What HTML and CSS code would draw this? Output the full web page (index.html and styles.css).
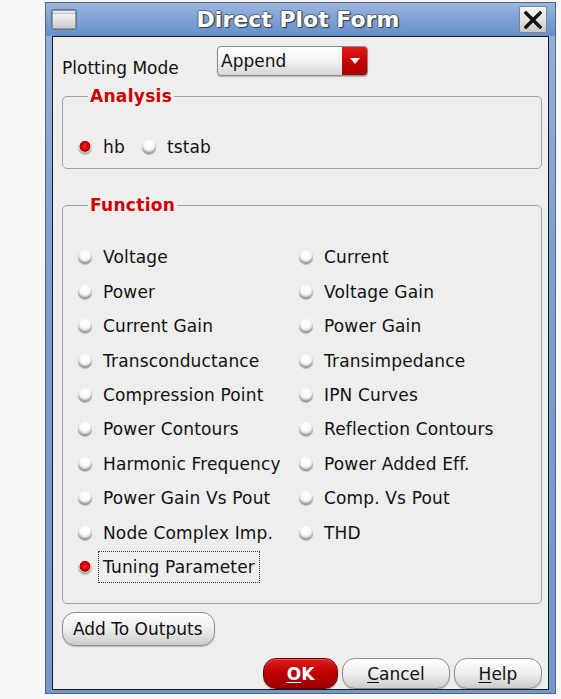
FILE: index.html
```html
<!DOCTYPE html>
<html>
<head>
<meta charset="utf-8">
<title>Direct Plot Form</title>
<link rel="stylesheet" href="styles.css">
</head>
<body>
<div class="window">
  <div class="titlebar">
    <span class="winicon">
      <svg width="26" height="21" viewBox="0 0 26 21">
        <defs>
          <linearGradient id="ig" x1="0" y1="0" x2="0" y2="1">
            <stop offset="0" stop-color="#f4f4f4"/>
            <stop offset="1" stop-color="#c9c9c9"/>
          </linearGradient>
        </defs>
        <rect x="0.5" y="0.5" width="25" height="20" rx="2" fill="#8e98a8" stroke="#6a7486"/>
        <rect x="2" y="5" width="22" height="14" fill="url(#ig)"/>
        <rect x="2" y="2" width="22" height="2.5" fill="#dfe6ef"/>
      </svg>
    </span>
    <span class="title">Direct Plot Form</span>
    <span class="closebtn">
      <svg width="18" height="18" viewBox="0 0 18 18">
        <path d="M2 2 L16 16 M16 2 L2 16" stroke="#111" stroke-width="3.4" stroke-linecap="square"/>
      </svg>
    </span>
  </div>
  <div class="panel">
    <div class="mode-row">
      <span class="mode-label">Plotting Mode</span>
      <div class="select">
        <span class="select-text">Append</span>
        <span class="select-arrow"></span>
      </div>
    </div>

    <fieldset class="group analysis">
      <legend>Analysis</legend>
      <div class="inline-opts">
        <div class="opt"><span class="radio on"></span><span class="opt-text">hb</span></div>
        <div class="opt"><span class="radio"></span><span class="opt-text">tstab</span></div>
      </div>
    </fieldset>

    <fieldset class="group function">
      <legend>Function</legend>
      <div class="opt-grid">
        <div class="opt"><span class="radio"></span><span class="opt-text">Voltage</span></div>
        <div class="opt"><span class="radio"></span><span class="opt-text">Current</span></div>
        <div class="opt"><span class="radio"></span><span class="opt-text">Power</span></div>
        <div class="opt"><span class="radio"></span><span class="opt-text">Voltage Gain</span></div>
        <div class="opt"><span class="radio"></span><span class="opt-text">Current Gain</span></div>
        <div class="opt"><span class="radio"></span><span class="opt-text">Power Gain</span></div>
        <div class="opt"><span class="radio"></span><span class="opt-text">Transconductance</span></div>
        <div class="opt"><span class="radio"></span><span class="opt-text">Transimpedance</span></div>
        <div class="opt"><span class="radio"></span><span class="opt-text">Compression Point</span></div>
        <div class="opt"><span class="radio"></span><span class="opt-text">IPN Curves</span></div>
        <div class="opt"><span class="radio"></span><span class="opt-text">Power Contours</span></div>
        <div class="opt"><span class="radio"></span><span class="opt-text">Reflection Contours</span></div>
        <div class="opt"><span class="radio"></span><span class="opt-text">Harmonic Frequency</span></div>
        <div class="opt"><span class="radio"></span><span class="opt-text">Power Added Eff.</span></div>
        <div class="opt"><span class="radio"></span><span class="opt-text">Power Gain Vs Pout</span></div>
        <div class="opt"><span class="radio"></span><span class="opt-text">Comp. Vs Pout</span></div>
        <div class="opt"><span class="radio"></span><span class="opt-text">Node Complex Imp.</span></div>
        <div class="opt"><span class="radio"></span><span class="opt-text">THD</span></div>
        <div class="opt"><span class="radio on"></span><span class="opt-text focus">Tuning Parameter</span></div>
      </div>
    </fieldset>

    <div class="add-row">
      <button class="btn add">Add To Outputs</button>
    </div>

    <div class="footer">
      <button class="btn ok"><u>O</u>K</button>
      <button class="btn cancel"><u>C</u>ancel</button>
      <button class="btn help"><u>H</u>elp</button>
    </div>
  </div>
</div>
</body>
</html>
```

FILE: styles.css
```css
* { box-sizing: border-box; }

html, body {
  margin: 0;
  padding: 0;
  background: #f7f7f7;
  font-family: "DejaVu Sans", "Liberation Sans", sans-serif;
  color: #111;
}

.window {
  width: 511px;
  height: 692px;
  margin: 2px 0 0 45px;
  border: 1px solid #56657a;
  background: linear-gradient(#93b2dc, #7c9fd1 40%, #7398cc);
  padding: 0 0 3px 0;
  display: flex;
  flex-direction: column;
}

.titlebar {
  height: 33px;
  display: flex;
  align-items: center;
  padding: 0 8px 0 5px;
  background: linear-gradient(#9cb8e0, #7fa2d4 45%, #6690cb);
}

.winicon {
  width: 26px;
  height: 21px;
  display: flex;
}

.title {
  flex: 1;
  text-align: center;
  font-size: 22px;
  font-weight: bold;
  color: #fff;
  line-height: 26px;
  text-shadow: 1px 1px 1px #333c4a, -1px 0 0 #5a6a80, 0 -1px 0 #5a6a80, 1px 0 1px #3a4250;
}

.closebtn {
  width: 28px;
  height: 27px;
  border: 1px solid #7c8494;
  border-radius: 2px;
  background: linear-gradient(#f6f6f6, #e2e2e2 55%, #c8c8c8);
  display: flex;
  align-items: center;
  justify-content: center;
}

.panel {
  height: 654px;
  margin: 0 6px;
  border: 1px solid #1c1c1c;
  background: #eeeeee;
  padding: 0 6px 0 9px;
  display: flex;
  flex-direction: column;
}

.mode-row {
  margin-top: 9px;
  display: flex;
  align-items: flex-start;
}

.mode-label {
  width: 155px;
  font-size: 17px;
  line-height: 20px;
  padding-top: 12px;
}

.select {
  width: 151px;
  height: 30px;
  border: 1px solid #8a8a8a;
  border-radius: 4px;
  background: linear-gradient(#ffffff, #f2f2f2 50%, #d6d6d6);
  display: flex;
  align-items: center;
  box-shadow: 0 1px 1px rgba(0,0,0,0.25);
}

.select-text {
  flex: 1;
  font-size: 17px;
  line-height: 20px;
  padding-left: 3px;
}

.select-arrow {
  width: 25px;
  height: 28px;
  border-radius: 0 3px 3px 0;
  background: linear-gradient(#e41818, #c40000 55%, #a60000);
  position: relative;
}

.select-arrow::after {
  content: "";
  position: absolute;
  left: 8px;
  top: 11px;
  border-left: 5px solid transparent;
  border-right: 5px solid transparent;
  border-top: 6px solid #fff;
}

.group {
  margin: 0;
  border: 1px solid #a4a4a4;
  border-radius: 5px;
  min-width: 0;
}

.group legend {
  margin-left: 10px;
  padding: 0 2px;
  font-size: 17px;
  line-height: 20px;
  font-weight: bold;
  color: #cc0000;
  letter-spacing: 0.3px;
}

.analysis {
  margin-top: 8px;
  padding: 25px 0 5px 15px;
}

.inline-opts {
  display: flex;
  gap: 12px;
}

.function {
  margin-top: 26px;
  padding: 25px 0 19px 15px;
}

.opt-grid {
  display: grid;
  grid-template-columns: 221px 1fr;
  grid-auto-rows: 34.44px;
  align-items: center;
}

.opt {
  display: flex;
  align-items: center;
  gap: 6px;
}

.radio {
  width: 14px;
  height: 14px;
  border-radius: 50%;
  background: radial-gradient(circle at 50% 30%, #ffffff 0%, #fafafa 38%, #e4e4e4 60%, #b8b8b8 85%, #a0a0a0 100%);
  box-shadow: inset 0 -2px 2px rgba(0,0,0,0.28), 0 1px 1px rgba(0,0,0,0.2);
  flex: none;
}

.radio.on {
  background: radial-gradient(circle at 50% 45%, #ff3030 0%, #dc0000 30%, #b40000 48%, #f6f6f6 56%, #e0e0e0 72%, #a6a6a6 92%, #909090 100%);
}

.opt-text {
  font-size: 17px;
  line-height: 20px;
  padding: 5px 4px;
  border: 1px dotted transparent;
  white-space: nowrap;
  letter-spacing: 0.15px;
}

.opt-text.focus {
  border-color: #333;
}

.add-row {
  margin-top: 8px;
  display: flex;
}

.btn {
  font-family: "DejaVu Sans", "Liberation Sans", sans-serif;
  font-size: 17px;
  color: #111;
  border: 1px solid #8c8c8c;
  border-radius: 13px;
  background: linear-gradient(#ffffff, #f0f0f0 45%, #dadada 80%, #cdcdcd);
  box-shadow: inset 0 1px 0 #fff, 0 1px 1px rgba(0,0,0,0.2);
  padding: 0;
  line-height: 20px;
}

.btn u {
  text-underline-offset: 2px;
}

.add {
  height: 34px;
  width: 153px;
  padding: 0 10px;
  text-align: left;
}

.footer {
  margin-top: auto;
  display: flex;
  justify-content: flex-end;
  gap: 4px;
}

.footer .btn {
  height: 31px;
  text-align: center;
}

.ok {
  width: 75px;
  color: #fff;
  font-weight: bold;
  border-color: #6e0000;
  background: linear-gradient(#e02020, #c00000 45%, #a80000 80%, #980000);
  box-shadow: inset 0 1px 0 #f05050, 0 1px 1px rgba(0,0,0,0.25);
}

.cancel { width: 108px; }
.help { width: 88px; }
```
